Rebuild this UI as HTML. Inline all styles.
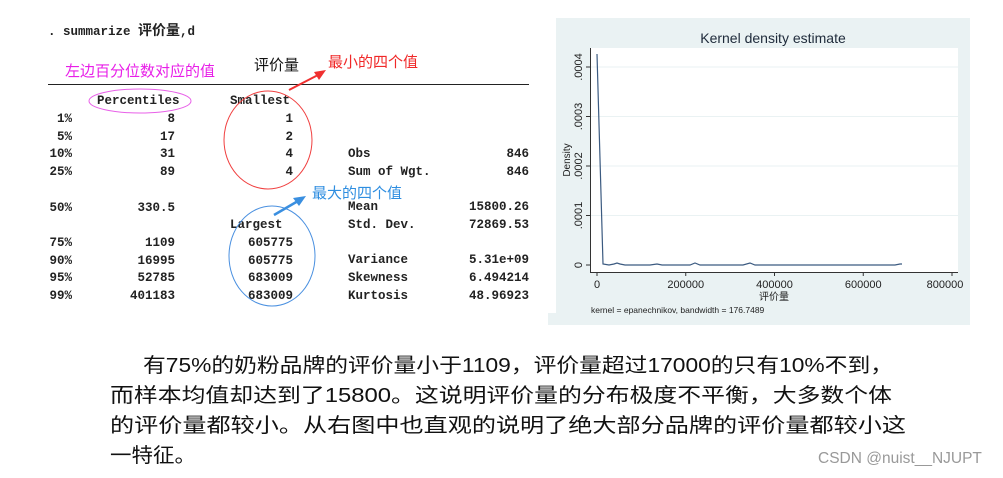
<!DOCTYPE html>
<html><head><meta charset="utf-8"><style>
body{margin:0;width:1003px;height:478px;background:#fff;position:relative;overflow:hidden}
.m{position:absolute;font-family:"Liberation Mono","Noto Sans CJK SC",monospace;font-weight:bold;font-size:12.5px;color:#222;line-height:17.7px;white-space:pre}
.r{text-align:right}
.c{position:absolute;font-family:"Liberation Sans","Noto Sans CJK SC",sans-serif;white-space:nowrap;line-height:1}
.ln{position:absolute;font-family:"Liberation Sans","Noto Sans CJK SC",sans-serif;font-size:20px;line-height:24px;white-space:nowrap;color:#111;transform-origin:0 50%}
</style></head><body>
<div class="m" style="left:48px;top:22px">. summarize <span style="font-family:'Noto Sans CJK SC';font-size:14px">评价量</span>,d</div>
<div class="c" style="left:65px;top:64px;font-size:15px;color:#e81ee8">左边百分位数对应的值</div>
<div class="c" style="left:254px;top:58px;font-size:15px;color:#111">评价量</div>
<div class="c" style="left:328px;top:55px;font-size:15px;color:#f02828">最小的四个值</div>
<div class="c" style="left:312px;top:186px;font-size:15px;color:#2f8ee0">最大的四个值</div>
<div style="position:absolute;left:48px;top:84px;width:481px;height:1px;background:#222"></div>
<div class="m" style="left:97px;top:93px">Percentiles</div>
<div class="m" style="left:230px;top:93px">Smallest</div>
<div class="m" style="left:230px;top:217px">Largest</div>
<div class="m r" style="left:40px;top:111px;width:32px">1%
5%
10%
25%
 
50%
 
75%
90%
95%
99%</div>
<div class="m r" style="left:95px;top:111px;width:80px">8
17
31
89
 
330.5
 
1109
16995
52785
401183</div>
<div class="m r" style="left:213px;top:111px;width:80px">1
2
4
4
 
 
 
605775
605775
683009
683009</div>
<div class="m" style="left:348px;top:146px">Obs
Sum of Wgt.
 
Mean
Std. Dev.
 
Variance
Skewness
Kurtosis</div>
<div class="m r" style="left:430px;top:146px;width:99px">846
846
 
15800.26
72869.53
 
5.31e+09
6.494214
48.96923</div>
<svg style="position:absolute;left:0;top:0" width="1003" height="478">
<ellipse cx="140" cy="101" rx="51" ry="12" fill="none" stroke="#e860e8" stroke-width="1"/>
<ellipse cx="268" cy="140" rx="44" ry="49" fill="none" stroke="#f04040" stroke-width="1"/>
<ellipse cx="272" cy="256" rx="43" ry="50" fill="none" stroke="#4a90e0" stroke-width="1"/>
<line x1="289" y1="90" x2="318" y2="75" stroke="#f03030" stroke-width="2"/>
<polygon points="326,70 314,72 319,80" fill="#f03030"/>
<line x1="274" y1="215" x2="298" y2="201" stroke="#3a8fe0" stroke-width="2.5"/>
<polygon points="306,196 293,198 299,206" fill="#3a8fe0"/>
<rect x="548" y="313" width="422" height="12" fill="#eaf2f3"/>
<rect x="556" y="18" width="414" height="295" fill="#eaf2f3"/>
<rect x="590" y="48" width="368" height="224" fill="#fff"/>
<g stroke="#eaf2f3" stroke-width="1">
<line x1="590" y1="67" x2="958" y2="67"/><line x1="590" y1="116.5" x2="958" y2="116.5"/><line x1="590" y1="166" x2="958" y2="166"/><line x1="590" y1="215.5" x2="958" y2="215.5"/></g>
<g stroke="#333" stroke-width="1">
<line x1="590.5" y1="48" x2="590.5" y2="272"/><line x1="590" y1="272.5" x2="958" y2="272.5"/>
<line x1="586" y1="67" x2="590" y2="67"/><line x1="586" y1="116.5" x2="590" y2="116.5"/><line x1="586" y1="166" x2="590" y2="166"/><line x1="586" y1="215.5" x2="590" y2="215.5"/><line x1="586" y1="265" x2="590" y2="265"/>
<line x1="597" y1="272" x2="597" y2="276"/><line x1="685.75" y1="272" x2="685.75" y2="276"/><line x1="774.5" y1="272" x2="774.5" y2="276"/><line x1="863.25" y1="272" x2="863.25" y2="276"/><line x1="952" y1="272" x2="952" y2="276"/></g>
<polyline fill="none" stroke="#3b5a80" stroke-width="1.2" points="597,54 603,264 609,265 614,264 617,263 620,264 625,265 650,265 657,264 662,265 690,265 695,263 700,265 743,265 750,263 755,265 895,265 900,264 902,264"/>
<g font-family="Liberation Sans,Noto Sans CJK SC,sans-serif" fill="#222">
<text x="773" y="43" font-size="14" text-anchor="middle" fill="#1e2a3a">Kernel density estimate</text>
<g font-size="11" text-anchor="middle">
<text x="597" y="288">0</text><text x="685.75" y="288">200000</text><text x="774.5" y="288">400000</text><text x="863.25" y="288">600000</text><text x="945" y="288">800000</text>
<text x="774" y="300" font-size="10">评价量</text>
<text transform="translate(582,67) rotate(-90)">.0004</text>
<text transform="translate(582,116.5) rotate(-90)">.0003</text>
<text transform="translate(582,166) rotate(-90)">.0002</text>
<text transform="translate(582,215.5) rotate(-90)">.0001</text>
<text transform="translate(582,265) rotate(-90)">0</text>
<text transform="translate(570,160) rotate(-90)" font-size="10">Density</text>
</g>
<text x="591" y="313" font-size="8.5">kernel = epanechnikov, bandwidth = 176.7489</text>
</g>
</svg>
<div class="ln" data-w="750" style="left:143px;top:354px">有75%的奶粉品牌的评价量小于1109，评价量超过17000的只有10%不到，</div>
<div class="ln" data-w="782" style="left:110px;top:384px">而样本均值却达到了15800。这说明评价量的分布极度不平衡，大多数个体</div>
<div class="ln" data-w="796" style="left:110px;top:414px">的评价量都较小。从右图中也直观的说明了绝大部分品牌的评价量都较小这</div>
<div class="ln" data-w="86" style="left:110px;top:444px">一特征。</div>
<div class="c" style="left:818px;top:451px;font-size:15.5px;color:#999">CSDN @nuist__NJUPT</div>
<script>
document.querySelectorAll('.ln').forEach(function(e){var w=e.getBoundingClientRect().width;e.style.transform='scaleX('+(e.dataset.w/w)+')';});
</script>
</body></html>
